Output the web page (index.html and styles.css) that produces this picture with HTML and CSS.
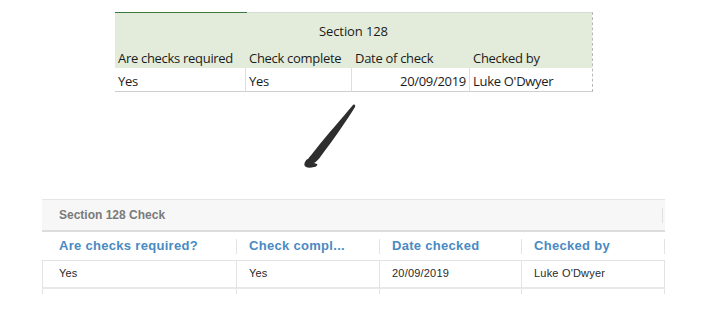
FILE: index.html
```html
<!DOCTYPE html>
<html lang="en">
<head>
    <meta charset="UTF-8">
    <title>Section 128 Check</title>
    <link rel="stylesheet" href="styles.css">
</head>
<body>

    <!-- Spreadsheet version -->
    <div class="sheet">
        <div class="sheet-tabs">
            <span class="tab-active"></span>
        </div>
        <div class="sheet-title">Section 128</div>
        <div class="sheet-grid">
            <div class="sh">Are checks required</div>
            <div class="sh">Check complete</div>
            <div class="sh">Date of check</div>
            <div class="sh">Checked by</div>
            <div class="sc">Yes</div>
            <div class="sc">Yes</div>
            <div class="sc num">20/09/2019</div>
            <div class="sc">Luke O'Dwyer</div>
        </div>
    </div>

    <div class="arrow">
        <svg width="80" height="80" viewBox="0 0 80 80">
            <path d="M56 9 C57 8 59 9 58 11 C50 24 36 44 24 60 C22 63 19 66 17 67 L20 68 C21 69 19 71 17 71 C14 72 11 72 9 71 C7 70 7 68 8 66 C9 64 10 63 11 63 C13 60 16 57 19 53 C30 39 45 22 56 9 Z" fill="#2e2e2e"/>
        </svg>
    </div>

    <!-- Record layout version -->
    <div class="record">
        <div class="record-title">
            <span>Section 128 Check</span>
            <span class="title-sep"></span>
        </div>
        <div class="record-grid">
            <div class="rh first">Are checks required?</div>
            <div class="rh">Check compl...</div>
            <div class="rh">Date checked</div>
            <div class="rh">Checked by</div>
            <div class="rc first">Yes</div>
            <div class="rc">Yes</div>
            <div class="rc">20/09/2019</div>
            <div class="rc">Luke O'Dwyer</div>
            <div class="re first"></div>
            <div class="re"></div>
            <div class="re"></div>
            <div class="re"></div>
        </div>
    </div>

</body>
</html>
```

FILE: styles.css
```css
body {
    margin: 0;
    background: white;
    width: 706px;
    height: 322px;
    overflow: hidden;
}

/* Spreadsheet */
.sheet {
    margin: 12px 0 0 115px;
    width: 477px;
    border-right: 1px dashed #b9b9b9;
    font-family: 'Open Sans', sans-serif;
    font-size: 13px;
    letter-spacing: -0.3px;
    color: #1b1b1b;
}

.sheet-tabs {
    height: 1px;
    background: #d8d8d8;
}

.tab-active {
    display: block;
    width: 132px;
    height: 2px;
    background: #3b7a41;
}

.sheet-title {
    background: #e3ecda;
    text-align: center;
    height: 31px;
    line-height: 37px;
    letter-spacing: -0.1px;
}

.sheet-grid {
    display: grid;
    grid-template-columns: 131px 106px 118px 122px;
}

.sh {
    background: #e3ecda;
    height: 24px;
    line-height: 28px;
    padding-left: 3px;
    white-space: nowrap;
}

.sc {
    height: 23px;
    line-height: 27px;
    padding-left: 3px;
    border-bottom: 1px solid #cfcfcf;
    border-right: 1px solid #dedede;
    white-space: nowrap;
}

.sc:last-child {
    border-right: none;
}

.sc.num {
    text-align: right;
    padding: 0 3px 0 0;
}

/* Drawn arrow */
.arrow {
    height: 103px;
    padding-left: 297px;
}

.arrow svg {
    display: block;
    margin-top: 4px;
}

/* Record layout */
.record {
    margin-left: 42px;
    width: 623px;
    font-family: 'Liberation Sans', Arial, sans-serif;
}

.record-title {
    display: flex;
    align-items: center;
    justify-content: space-between;
    height: 30px;
    background: #f7f7f7;
    border-top: 1px solid #e6e6e6;
    border-bottom: 2px solid #dcdcdc;
    padding-left: 17px;
    font-size: 12px;
    font-weight: bold;
    color: #7a7a7a;
}

.title-sep {
    width: 1px;
    height: 15px;
    background: #e0e0e0;
    margin-right: 2px;
}

.record-grid {
    display: grid;
    grid-template-columns: 195px 143px 142px 143px;
}

.rh {
    height: 28px;
    line-height: 28px;
    padding-left: 12px;
    font-size: 13px;
    letter-spacing: 0.3px;
    font-weight: bold;
    color: #4a8ac2;
    border-bottom: 1px solid #e3e3e3;
    position: relative;
    white-space: nowrap;
}

.rh.first {
    padding-left: 17px;
}

.rh::after {
    content: "";
    position: absolute;
    right: 0;
    top: 7px;
    width: 1px;
    height: 15px;
    background: #e3e3e3;
}

.rc {
    height: 26px;
    line-height: 25px;
    padding-left: 12px;
    font-size: 11px;
    letter-spacing: 0.2px;
    color: #2a2a2a;
    border-right: 1px solid #e3e3e3;
    border-bottom: 2px solid #e8e8e8;
}

.rc.first {
    padding-left: 16px;
    border-left: 1px solid #e3e3e3;
}

.re {
    height: 5px;
    border-right: 1px solid #e3e3e3;
}

.re.first {
    border-left: 1px solid #e3e3e3;
}
```
